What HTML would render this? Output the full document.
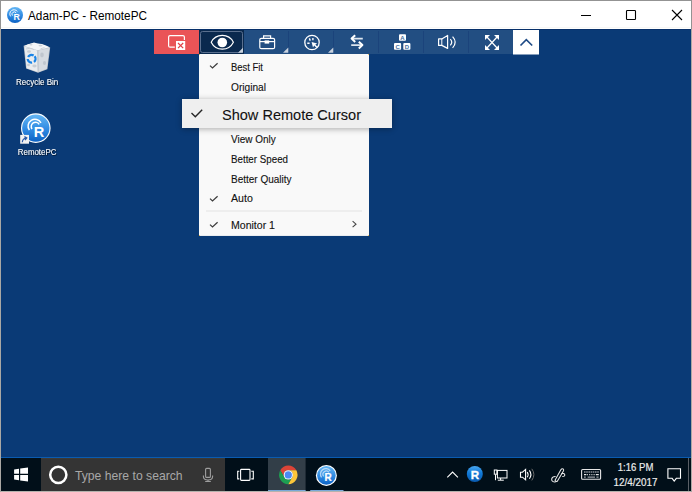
<!DOCTYPE html>
<html><head><meta charset="utf-8">
<style>
*{margin:0;padding:0;box-sizing:border-box}
html,body{width:692px;height:492px;overflow:hidden;background:#fff;font-family:"Liberation Sans",sans-serif}
.a{position:absolute}
svg{position:absolute;left:0;top:0;overflow:visible}
text{font-family:"Liberation Sans",sans-serif}
</style></head><body>
<!-- frame -->
<div class="a" style="left:0;top:0;width:692px;height:492px;border:1px solid #939393;border-bottom-color:#b4b2ad;background:#fff"></div><div class="a" style="left:1px;top:27px;width:690px;height:1px;background:#f7f7f5"></div><div class="a" style="left:0;top:29px;width:1px;height:463px;background:#aaa8a4"></div><div class="a" style="left:691px;top:29px;width:1px;height:463px;background:#aaa8a4"></div>
<!-- desktop -->
<div class="a" style="left:1px;top:29px;width:690px;height:428px;background:#0a3a76;border-top:1px solid #07306a"></div>
<!-- taskbar -->
<div class="a" style="left:1px;top:457px;width:690px;height:34px;background:#010f19;border-top:1px solid #0a5bb0"></div>

<svg id="s1" width="692" height="492" viewBox="0 0 692 492">
  <!-- TITLE -->
  <defs>
    <linearGradient id="gR" x1="0" y1="0" x2="0" y2="1"><stop offset="0" stop-color="#64b6f4"/><stop offset="0.55" stop-color="#2f8ae2"/><stop offset="1" stop-color="#0c62c4"/></linearGradient>
  </defs>
  <circle cx="15" cy="15" r="8" fill="url(#gR)"/>
  <g fill="none" stroke="#fff" stroke-width="1" opacity="0.95">
    <path d="M10.6 16.4A3.9 3.9 0 1 1 17.4 11.5"/>
    <path d="M12.4 15.6A2.2 2.2 0 1 1 16.2 12.9"/>
  </g>
  <text x="16.6" y="19.9" font-size="8.8" font-weight="bold" fill="#fff" text-anchor="middle">R</text>
  <text x="28" y="20" font-size="12.6" fill="#000" textLength="119" lengthAdjust="spacingAndGlyphs">Adam-PC - RemotePC</text>
  <path d="M581 15.5H591" stroke="#000" stroke-width="1"/>
  <rect x="626.5" y="10.5" width="9" height="9" rx="0.8" fill="none" stroke="#000" stroke-width="1.1"/>
  <path d="M672 10L682 20M682 10L672 20" stroke="#000" stroke-width="1.1"/>
</svg>
<svg id="s2" width="692" height="492" viewBox="0 0 692 492">
  <rect x="154" y="30" width="385" height="24" fill="#224e82"/>
  <rect x="154" y="30" width="45" height="24" fill="#ea5457"/>
  <rect x="199" y="30" width="45" height="24" fill="#0a294e"/>
  <rect x="200.5" y="31.5" width="42" height="21" rx="2" fill="none" stroke="#5a6f8e" stroke-width="1"/>
  <g fill="#1b437b"><rect x="288" y="31" width="1" height="22"/><rect x="333" y="31" width="1" height="22"/><rect x="378" y="31" width="1" height="22"/><rect x="423" y="31" width="1" height="22"/><rect x="468" y="31" width="1" height="22"/></g>
  <rect x="513" y="30" width="26" height="24.5" fill="#fff"/>
  <!-- disconnect icon -->
  <rect x="168.6" y="35.6" width="15.8" height="11.6" rx="1.5" fill="none" stroke="#fff" stroke-width="1.2"/>
  <rect x="174.8" y="40" width="11.4" height="11" fill="#ea5457"/>
  <rect x="176" y="41" width="9.2" height="9" fill="#fff"/>
  <path d="M178 43L183.2 48.2M183.2 43L178 48.2" stroke="#e04046" stroke-width="1.2"/>
  <!-- eye -->
  <path d="M211.2 42.3A12.4 12.4 0 0 1 233.4 42.3A12.4 12.4 0 0 1 211.2 42.3Z" fill="none" stroke="#fff" stroke-width="1.2" stroke-linejoin="round"/>
  <circle cx="222.3" cy="42.5" r="4.8" fill="#fff"/>
  <!-- triangles -->
  <g fill="#c9d2de">
    <path d="M243 47.8V52.8H238Z"/>
    <path d="M288.3 47.5V52.8H283Z"/>
    <path d="M333.3 47.5V52.8H328Z"/>
  </g>
  <!-- toolbox -->
  <g fill="none" stroke="#fff" stroke-width="1.2">
    <rect x="259.8" y="38.3" width="14.8" height="10.4" rx="1.5"/>
    <path d="M263.6 38.3V35.8H270.6V38.3"/>
    <path d="M259.8 41.6H274.6"/>
  </g>
  <rect x="264.6" y="40.4" width="4.6" height="3.2" fill="#fff"/>
  <!-- cursor circle -->
  <circle cx="312" cy="42.5" r="7.2" fill="none" stroke="#fff" stroke-width="1.3"/>
  <path d="M311.6 42L317.2 43.4L315.3 44.6L317.6 47L316.5 48L314.2 45.6L313 47.6Z" fill="#fff"/>
  <path d="M309.3 38.4L310.3 40.6M312.9 38V40.3M307.3 43.3H309.6" stroke="#fff" stroke-width="1.4"/>
  <!-- swap -->
  <path d="M352.5 38.6H362.8M351.2 45.1H361.5" fill="none" stroke="#dde5ee" stroke-width="1.6"/><path d="M355.2 35.2L351.6 38.6L355.2 42M358.8 41.7L362.4 45.1L358.8 48.5" fill="none" stroke="#fff" stroke-width="2" stroke-linejoin="round"/>
  <!-- keys -->
  <g fill="#fff">
    <rect x="399" y="34.2" width="7" height="6.6" rx="1"/>
    <rect x="394" y="43" width="7.1" height="6.8" rx="1"/>
    <rect x="403.3" y="43" width="7.1" height="6.8" rx="1"/>
  </g>
  <g font-size="6" font-weight="bold" fill="#46709f" text-anchor="middle">
    <text x="402.5" y="39.7">A</text>
    <text x="397.6" y="48.6">C</text>
    <text x="406.9" y="48.6">D</text>
  </g>
  <!-- volume -->
  <path d="M438.6 38.9H441.8L447.6 35.4V48.4L441.8 45.4H438.6Z" fill="none" stroke="#fff" stroke-width="1.2" stroke-linejoin="round"/>
  <path d="M441.8 38.9V45.4" stroke="#fff" stroke-width="1"/>
  <path d="M450.3 39.2Q453.2 42.3 450.3 45.4M452.6 36.7Q457.8 42.3 452.6 47.9" fill="none" stroke="#fff" stroke-width="1.2"/>
  <!-- fullscreen -->
  <path d="M486.5 36.5L497.5 48.5M497.5 36.5L486.5 48.5" stroke="#fff" stroke-width="1.2"/>
  <g fill="#fff">
    <path d="M485 35H490L485 40Z"/><path d="M499 35H494L499 40Z"/>
    <path d="M485 50H490L485 45Z"/><path d="M499 50H494L499 45Z"/>
  </g>
  <!-- chevron -->
  <path d="M520.5 45.5L526.3 39.6L532.2 45.5" fill="none" stroke="#1f4b86" stroke-width="1.6"/>
</svg>
<svg id="s3" width="692" height="492" viewBox="0 0 692 492">
  <rect x="199" y="54" width="170" height="182" fill="#f9f9f9"/><rect x="199" y="235" width="170" height="1" fill="#e9ecef"/><g fill="#f0b030" opacity="0.8"><rect x="199" y="54" width="1" height="1"/><rect x="368" y="54" width="1" height="1"/><rect x="199" y="235" width="1" height="1"/><rect x="368" y="235" width="1" height="1"/></g>
  <g fill="none" stroke="#3c3c3c" stroke-width="1.2">
    <path d="M210 65.6L212.5 68L217.6 63.2"/>
    <path d="M210 198.6L212.5 201L217.6 196.2"/>
    <path d="M210 224.6L212.5 227L217.6 222.2"/>
  </g>
  <g font-size="10.8" fill="#111" stroke="#111" stroke-width="0.12">
    <text x="231" y="70.8" textLength="32" lengthAdjust="spacingAndGlyphs">Best Fit</text>
    <text x="231" y="90.6" textLength="35" lengthAdjust="spacingAndGlyphs">Original</text>
    <text x="231" y="143.1" textLength="44.7" lengthAdjust="spacingAndGlyphs">View Only</text>
    <text x="231" y="162.9" textLength="57" lengthAdjust="spacingAndGlyphs">Better Speed</text>
    <text x="231" y="182.5" textLength="60.6" lengthAdjust="spacingAndGlyphs">Better Quality</text>
    <text x="231" y="202.4" textLength="21.8" lengthAdjust="spacingAndGlyphs">Auto</text>
    <text x="231" y="228.5" textLength="44" lengthAdjust="spacingAndGlyphs">Monitor 1</text>
  </g>
  <rect x="206" y="210.5" width="156" height="1" fill="#e3e3e3"/>
  <path d="M352.6 221.2L356 224.2L352.6 227.2" fill="none" stroke="#444" stroke-width="1.1"/>
</svg>
<div class="a" style="left:182px;top:99px;width:210px;height:28.5px;background:#efefef;box-shadow:0 1px 6px rgba(0,0,0,0.32)"></div>
<svg id="s4" width="692" height="492" viewBox="0 0 692 492">
  <path d="M191.5 113.1L195.3 116.7L202.2 109.7" fill="none" stroke="#262626" stroke-width="1.4"/>
  <text x="222" y="119.7" font-size="15.5" fill="#111" stroke="#111" stroke-width="0.1" textLength="139" lengthAdjust="spacingAndGlyphs">Show Remote Cursor</text>
</svg>
<svg id="s5" width="692" height="492" viewBox="0 0 692 492">
  <defs>
    <linearGradient id="gR2" x1="0" y1="0" x2="0" y2="1"><stop offset="0" stop-color="#6dbaf5"/><stop offset="0.5" stop-color="#3890e4"/><stop offset="1" stop-color="#0d66c8"/></linearGradient>
    <filter id="tsh" x="-20%" y="-50%" width="140%" height="200%"><feDropShadow dx="0.6" dy="0.6" stdDeviation="0.6" flood-color="#000" flood-opacity="0.9"/></filter>
  </defs>
  <!-- recycle bin -->
  <path d="M23.6 45.8L33 43L41 44.2L50.2 47.4L47.4 69.2L38 72.7L26.1 68.6Z" fill="#b9c0c9"/>
  <path d="M24.4 46.4L37.4 50.4L37.9 72L26.7 68.2Z" fill="#e9ecef"/>
  <path d="M38.4 50.5L49.4 47.9L46.8 68.8L38.6 71.9Z" fill="#d6dbe1"/>
  <path d="M24.2 46L28 44.2L31 43.4L34 42.4L37.5 43.6L42 43.9L46 45.6L49.6 47.3L43 49L37.6 50.2Z" fill="#f4f6f8"/>
  <path d="M26 49L30 48.2L34 49.6M40.5 48.8L44.5 47.6" stroke="#c4cad2" stroke-width="0.8" fill="none"/>
  <g fill="#aeb6c0" opacity="0.55">
    <ellipse cx="29" cy="51.5" rx="2" ry="1.2"/><ellipse cx="34.5" cy="66" rx="2.2" ry="1.4"/><ellipse cx="42" cy="55" rx="1.8" ry="2.4"/><ellipse cx="44.5" cy="63" rx="1.6" ry="2"/><ellipse cx="28.5" cy="65" rx="1.4" ry="1.2"/><ellipse cx="40.5" cy="45.6" rx="2" ry="0.9"/><ellipse cx="31" cy="44.8" rx="1.6" ry="0.8"/>
  </g>
  <path d="M37.6 50.3L38 72.3" stroke="#c2c8cf" stroke-width="0.8"/>
  <circle cx="31.6" cy="58.8" r="3.9" fill="none" stroke="#1a84e6" stroke-width="2.3" stroke-dasharray="6.2 2" transform="rotate(-40 31.6 58.8)"/>
  <g font-size="9.9" fill="#fff" filter="url(#tsh)">
    <text x="16" y="85.4" textLength="42.2" lengthAdjust="spacingAndGlyphs">Recycle Bin</text>
    <text x="17.8" y="155" textLength="38.6" lengthAdjust="spacingAndGlyphs">RemotePC</text>
  </g>
  <!-- remotepc icon -->
  <circle cx="35.8" cy="128.1" r="14.8" fill="#fff"/>
  <circle cx="35.8" cy="128.1" r="13.7" fill="url(#gR)"/>
  <g transform="translate(35.8 128.1) scale(0.9867)">
    <g fill="none" stroke="#fff" stroke-width="1.5">
      <path d="M-6.53 2.11A7 7 0 1 1 5.26 -5.4"/>
      <path d="M-3.82 0.87A4.3 4.3 0 1 1 3.42 -3.75"/>
    </g>
    <text x="3.3" y="8.7" font-size="14.8" font-weight="bold" fill="#fff" text-anchor="middle">R</text>
  </g>
  <rect x="20.2" y="134.9" width="8.8" height="8.8" fill="#f2f2f2"/>
  <path d="M22.3 142.2Q22.6 138.6 26 138M24.4 136.6L26.8 137.9L25 140" fill="none" stroke="#2a5aa8" stroke-width="1.2"/>
</svg>
<svg id="s6" width="692" height="492" viewBox="0 0 692 492">
  <defs>
    <linearGradient id="gR3" x1="0" y1="0" x2="0" y2="1"><stop offset="0" stop-color="#6dbaf5"/><stop offset="0.5" stop-color="#3890e4"/><stop offset="1" stop-color="#0d66c8"/></linearGradient>
  </defs>
  <rect x="41" y="458" width="184" height="33" fill="#343434"/><rect x="41" y="458" width="184" height="1" fill="#3d3935"/>
  <rect x="268" y="458" width="37.6" height="33" fill="#323e48"/>
  <rect x="268" y="490" width="37.6" height="1" fill="#78a8d8"/>
  <rect x="310.2" y="490" width="33.3" height="1" fill="#78a8d8"/>
  <rect x="688" y="458" width="1" height="33" fill="#5a5f66"/>
  <!-- windows logo -->
  <g fill="#fff">
    <path d="M14.1 469.4L19 468.7V473.7H14.1Z"/>
    <path d="M20.2 468.5L28 467.6V473.7H20.2Z"/>
    <path d="M14.1 475H19V480.3L14.1 479.6Z"/>
    <path d="M20.2 475H28V481.5L20.2 480.5Z"/>
  </g>
  <!-- cortana -->
  <circle cx="58.3" cy="474.8" r="8.1" fill="none" stroke="#fff" stroke-width="2.5"/>
  <text x="75" y="480" font-size="12.8" fill="#a8a8a8" textLength="107.6" lengthAdjust="spacingAndGlyphs">Type here to search</text>
  <!-- mic -->
  <g fill="none" stroke="#9e9e9e" stroke-width="1.1">
    <rect x="205.6" y="468.4" width="4.8" height="9" rx="1"/>
    <path d="M203.4 475.4V476.6Q203.4 480 208 480Q212.6 480 212.6 476.6V475.4M208 480V481.5M205.2 481.5H210.8"/>
  </g>
  <!-- task view -->
  <g fill="none" stroke="#fff" stroke-width="1.1">
    <rect x="240.6" y="469.4" width="9.4" height="11" rx="0.8"/>
    <path d="M239.3 471.2H237.7V478.9H239.3M251.3 471.2H253.3V478.9H251.3"/>
  </g>
  <!-- chrome -->
  <path d="M296.35 470.25A9.3 9.3 0 0 0 280.25 470.25L284.27 477.22A4.65 4.65 0 0 1 288.30 470.25Z" fill="#db4437"/>
  <path d="M280.25 470.25A9.3 9.3 0 0 0 288.30 484.20L292.33 477.22A4.65 4.65 0 0 1 284.27 477.22Z" fill="#1e9e52"/>
  <path d="M288.30 484.20A9.3 9.3 0 0 0 296.35 470.25L288.30 470.25A4.65 4.65 0 0 1 292.33 477.22Z" fill="#fcc63a"/>
  <circle cx="288.3" cy="474.9" r="4.65" fill="#fff"/>
  <circle cx="288.3" cy="474.9" r="3.63" fill="#4a8af4"/>
  <!-- R taskbar -->
  <circle cx="326.4" cy="475.4" r="10.5" fill="#fff"/>
  <circle cx="326.4" cy="475.4" r="9.3" fill="url(#gR)"/>
  <g fill="none" stroke="#fff" stroke-width="1.3" opacity="0.6">
    <path d="M321.6 477.4A5.2 5.2 0 1 1 330.2 470.8"/>
    <path d="M323.7 476.4A3.2 3.2 0 1 1 328.9 472.4"/>
  </g>
  <text x="328.1" y="481" font-size="10" font-weight="bold" fill="#fff" stroke="#fff" stroke-width="0.2" text-anchor="middle">R</text>
  <!-- tray chevron -->
  <path d="M447.3 477.4L452.6 472.1L457.9 477.4" fill="none" stroke="#fff" stroke-width="1.1"/>
  <!-- tray R -->
  <linearGradient id="gT" x1="0" y1="0" x2="0" y2="1"><stop offset="0" stop-color="#48a6f0"/><stop offset="0.45" stop-color="#1079d8"/><stop offset="1" stop-color="#0a5aae"/></linearGradient>
  <circle cx="474.8" cy="474" r="8" fill="url(#gT)"/>
  <text x="475" y="478.6" font-size="11.6" font-weight="bold" fill="#fff" stroke="#fff" stroke-width="0.35" text-anchor="middle">R</text>
  <!-- network -->
  <g fill="none" stroke="#fff" stroke-width="1">
    <rect x="497.4" y="470.4" width="9.6" height="7.6"/>
    <path d="M500.6 478V480M497.8 480.2H503.8M495.5 474.5V480.2"/>
    <rect x="494.3" y="470" width="2.6" height="4.2"/>
  </g>
  <!-- volume -->
  <g fill="none" stroke="#fff" stroke-width="1.1">
    <path d="M520.5 472.2H522.5L525.6 469.4V479.8L522.5 477.2H520.5Z"/>
    <path d="M527.2 472Q529 474.6 527.2 477.2M529.4 470.4Q532.4 474.6 529.4 478.8"/>
  </g>
  <path d="M531.8 468.8Q536 474.6 531.8 480.4" fill="none" stroke="#6a6a6a" stroke-width="1"/>
  <!-- pen -->
  <g fill="none" stroke="#e8e8e8" stroke-width="1.05" stroke-linejoin="round">
    <path d="M555 480.2L561 469.6Q562.2 468 563.4 469.2Q563.9 470 563.4 471L557.3 481.2Q556 482 555 480.2Z"/>
    <path d="M555.6 476.6Q552.4 476.4 551.7 478.8Q551.4 481.6 554.4 481.9Q556 481.9 556.6 481.4"/>
    <path d="M561.3 473.7Q564.2 472.8 564.8 474.8Q564.9 476.6 562.3 476.5"/>
  </g>
  <!-- keyboard -->
  <rect x="581.6" y="469.5" width="19" height="9.8" rx="1" fill="none" stroke="#e6e6e6" stroke-width="1.1"/>
  <path d="M584 472H598.8" stroke="#8a9098" stroke-width="1.3" stroke-dasharray="1.6 0.6"/>
  <path d="M584 474.6H586.4M587.2 474.6H588M589 474.6H589.8M590.8 474.6H591.6M592.6 474.6H593.4M594.4 474.6H595.2M596 474.6H598.8" stroke="#e8e8e8" stroke-width="1.1"/>
  <path d="M584 477.2H585.8M587.6 477.2H595M596.4 477.2H598.6" stroke="#9aa0a6" stroke-width="1.3"/>
  <!-- clock -->
  <g font-size="10.6" fill="#ececec" stroke="#ececec" stroke-width="0.2">
    <text x="617.8" y="470.9" textLength="35.6" lengthAdjust="spacingAndGlyphs">1:16 PM</text>
    <text x="613.6" y="485.8" textLength="43.8" lengthAdjust="spacingAndGlyphs">12/4/2017</text>
  </g>
  <!-- notification -->
  <path d="M667.9 468.7H680.5V478.3H676.3L674.2 481L672.1 478.3H667.9Z" fill="none" stroke="#fff" stroke-width="1.1"/>
</svg>
</body></html>
